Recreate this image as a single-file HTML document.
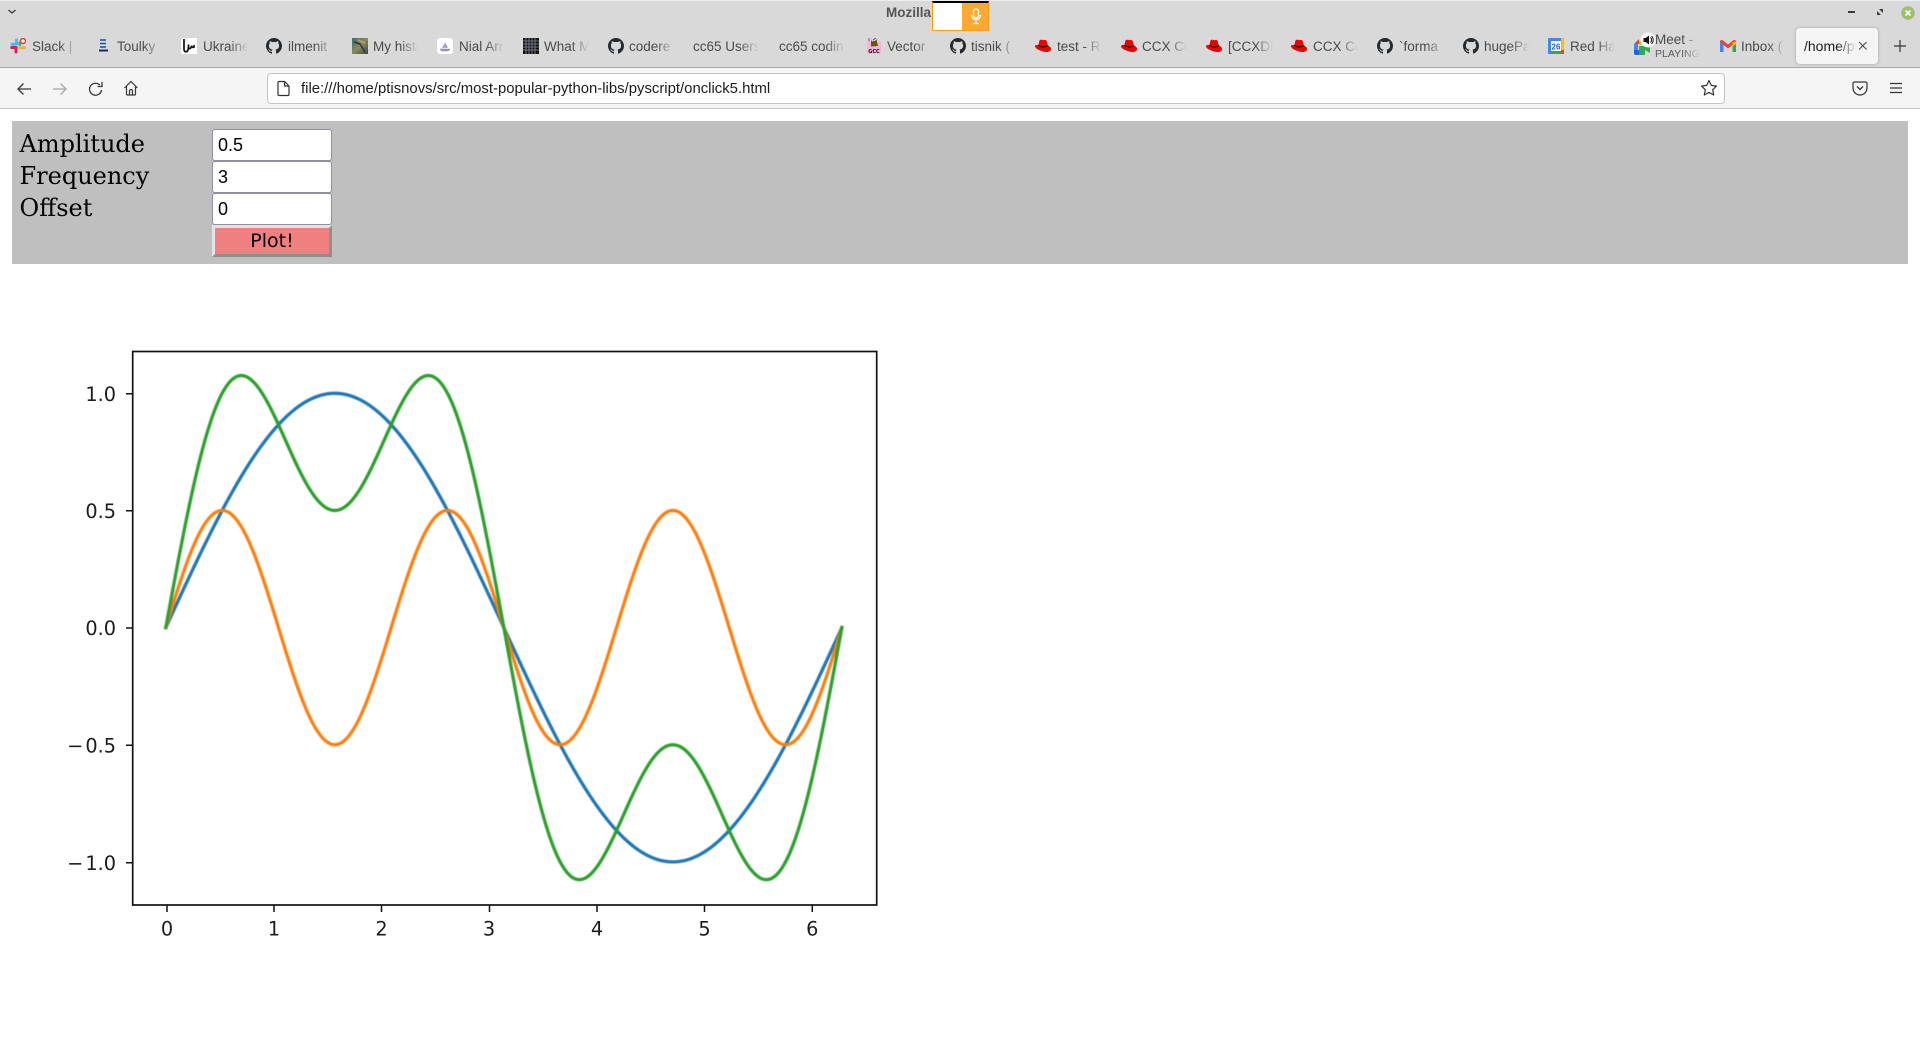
<!DOCTYPE html>
<html><head><meta charset="utf-8"><title>onclick5</title>
<style>
html,body{margin:0;padding:0;width:1920px;height:1047px;overflow:hidden;background:#fff}
body{position:relative;font-family:"Liberation Sans",sans-serif}
div,span,svg,input,button{position:absolute;box-sizing:border-box}
.t{top:38px;height:18px;line-height:18px;font-size:13.5px;color:#4a4a4a;width:45px;overflow:hidden;white-space:nowrap;-webkit-mask-image:linear-gradient(90deg,#000 60%,transparent 100%);mask-image:linear-gradient(90deg,#000 60%,transparent 100%)}
.i{top:38px;width:16px;height:16px}
.lb{left:19.5px;font-family:"DejaVu Serif",serif;font-size:24px;line-height:28px;height:28px;color:#000;white-space:nowrap}
.in{left:212px;width:120px;height:32px;background:#fff;border:1px solid #8f8f9d;border-radius:3px;font-family:"Liberation Sans",sans-serif;font-size:18px;line-height:30px;padding:0 0 0 5px;color:#000}
.tk{font-family:"DejaVu Sans",sans-serif;font-size:19.3px;fill:#1c1c1c}
</style></head><body>
<svg width="0" height="0" style="left:0;top:0"><defs>
<symbol id="gh" viewBox="0 0 16 16"><path fill="#24292e" d="M8 0C3.58 0 0 3.58 0 8c0 3.54 2.29 6.53 5.47 7.59.4.07.55-.17.55-.38 0-.19-.01-.82-.01-1.49-2.01.37-2.53-.49-2.69-.94-.09-.23-.48-.94-.82-1.13-.28-.15-.68-.52-.01-.53.63-.01 1.08.58 1.23.82.72 1.21 1.87.87 2.33.66.07-.52.28-.87.51-1.07-1.78-.2-3.64-.89-3.64-3.95 0-.87.31-1.59.82-2.15-.08-.2-.36-1.02.08-2.12 0 0 .67-.21 2.2.82.64-.18 1.32-.27 2-.27.68 0 1.36.09 2 .27 1.53-1.04 2.2-.82 2.2-.82.44 1.1.16 1.92.08 2.12.51.56.82 1.27.82 2.15 0 3.07-1.87 3.75-3.65 3.95.29.25.54.73.54 1.48 0 1.07-.01 1.93-.01 2.2 0 .21.15.46.55.38A8.013 8.013 0 0016 8c0-4.42-3.58-8-8-8z"/></symbol>
<symbol id="hat" viewBox="0 0 16 16"><path fill="#ee0000" d="M4.500 2.500C5.500 1.200 7.500 1.800 8.500 2.200 10 1.600 11.300 1.800 11.800 3.500L12.800 7.500C14.800 8.200 16 9.500 16 11 16 13 14 14 11.500 14 7.500 14 3.500 12 1.800 10.800.7 10 0 9 0 8.200 0 7 1.800 6.700 3.300 7.200L4.500 2.500Z"/><path fill="none" stroke="#111" stroke-width="1.100" d="M3.300 7.300C6 9.300 10 9.800 12.800 7.700"/></symbol>
</defs></svg>

<!-- title + tab bar -->
<div style="left:0;top:0;width:1920px;height:83px;background:#d9d9d9"></div>
<div style="left:0;top:0;width:1920px;height:1px;background:#eee"></div>
<div style="left:0;top:67px;width:1920px;height:1px;background:#a9a9a9"></div>
<svg style="left:7px;top:8px" width="10" height="8"><path d="M1.500 2 5 5 8.500 2" fill="none" stroke="#3c3c3c" stroke-width="1.400"/></svg>
<div style="left:886px;top:4px;height:18px;line-height:18px;font-size:13.500px;font-weight:bold;color:#555">Mozilla</div>
<div style="left:932px;top:1px;width:57px;height:30px;background:#ffa833;border:1px solid #ff9a10;border-top:2px solid #000"></div>
<div style="left:933px;top:3px;width:29px;height:27px;background:#fff"></div>
<svg style="left:968px;top:8px" width="16" height="18"><rect x="5.500" y="1" width="5" height="9" rx="2.500" fill="none" stroke="#fff" stroke-width="1.200"/><path d="M3.500 7c0 6 9 6 9 0M8 11.500V15M5 15.500h6" fill="none" stroke="#fff" stroke-width="1.200"/></svg>
<svg style="left:1847px;top:8px" width="12" height="8"><rect x="1" y="3" width="7" height="2" fill="#3a3a3a"/></svg>
<svg style="left:1875px;top:6px" width="12" height="12"><path d="M4 3h4v4zM6 9H2V5z" fill="#3a3a3a"/></svg>
<svg style="left:1900px;top:5px" width="16" height="16"><circle cx="8" cy="8" r="6.800" fill="#9cbf70"/><path d="M5.500 5.500l5 5M10.500 5.500l-5 5" stroke="#fff" stroke-width="1.600"/></svg>

<!-- tabs -->
<svg class="i" style="left:10px" viewBox="0 0 16 16"><g stroke-width="3" stroke-linecap="round" fill="none"><path stroke="#36c5f0" d="M6.500 2v4M2 6.200h4"/><path stroke="#2eb67d" d="M2 9.800h-.1M6.300 9.500V9.500"/><path stroke="#e01e5a" d="M6 9.500v4.500M1.700 9.500h4"/><path stroke="#ecb22e" d="M9.800 9.800h4.500"/><path stroke="#2eb67d" d="M9.800 5v1.500"/></g><circle cx="13" cy="3" r="2.500" fill="#fff" stroke="#e33" stroke-width="1.500"/></svg>
<span class="t" style="left:32px">Slack | G</span>
<svg class="i" style="left:99px" viewBox="0 0 16 16"><path d="M1 2h6M1 5.500h6M1 9h6" stroke="#1c4f9c" stroke-width="1.600"/><path d="M0 12.500h9" stroke="#10305c" stroke-width="2"/></svg>
<span class="t" style="left:117px">Toulky</span>
<svg class="i" style="left:181px" viewBox="0 0 16 16"><rect width="16" height="16" fill="#fff"/><path d="M3 1v10c0 3.500 3 3.500 4 1 .6-2 .4-4.500.7-5.500M8 10c1 1 2 .5 2.200-1.500M10.500 7.500c.2 2 1.500 2.200 2.500 1.500 0-1 .3-2 .3-2" fill="none" stroke="#111" stroke-width="1.700"/></svg>
<span class="t" style="left:203px">Ukraine</span>
<svg class="i" style="left:266px"><use href="#gh"/></svg>
<span class="t" style="left:288px">ilmenit</span>
<svg class="i" style="left:352px" viewBox="0 0 16 16"><defs><linearGradient id="ph" x1="0" y1="0" x2="1" y2="1"><stop offset="0" stop-color="#3a6d78"/><stop offset=".5" stop-color="#8a8a5a"/><stop offset="1" stop-color="#3a4a4e"/></linearGradient></defs><rect width="16" height="16" fill="url(#ph)"/><path d="M2 4l6 2 5 8" stroke="#28353a" stroke-width="1.500" fill="none"/><path d="M6 2l7 3" stroke="#b9a268" stroke-width="1.500"/></svg>
<span class="t" style="left:373px">My histo</span>
<svg class="i" style="left:437px" viewBox="0 0 16 16"><rect width="16" height="16" rx="3" fill="#fff"/><path d="M3 11h10l-1.500 2h-7zM8 4v6M8 5l2.500 4.500H8.500M7.500 6L5.500 9.500h2" fill="#99a" stroke="#889" stroke-width=".5"/></svg>
<span class="t" style="left:459px">Nial Arr</span>
<svg class="i" style="left:523px" viewBox="0 0 16 16"><rect width="16" height="16" fill="#111"/><path d="M3 0v16M6 0v16M9 0v16M12 0v16M0 3h16M0 6h16M0 9h16M0 12h16" stroke="#8a8ea0" stroke-width=".8"/></svg>
<span class="t" style="left:544px">What M</span>
<svg class="i" style="left:608px"><use href="#gh"/></svg>
<span class="t" style="left:629px">codere</span>
<span class="t" style="left:693px;width:66px;-webkit-mask-image:linear-gradient(90deg,#000 70%,transparent 100%);mask-image:linear-gradient(90deg,#000 70%,transparent 100%)">cc65 Users</span>
<span class="t" style="left:779px;width:66px;-webkit-mask-image:linear-gradient(90deg,#000 70%,transparent 100%);mask-image:linear-gradient(90deg,#000 70%,transparent 100%)">cc65 coding</span>
<svg class="i" style="left:866px" viewBox="0 0 16 16"><rect x="1" y="3" width="14" height="13" rx="2" fill="#f3b6d6"/><path d="M5 1l1 3 1-1 2 0 1.500-2 .5 3 1 4-7 .5z" fill="#5d5a10"/><path d="M3 0v3M7 2l3-2" stroke="#8a3aa0" stroke-width="1"/><text x="8" y="15" text-anchor="middle" font-family="DejaVu Sans" font-size="5" font-weight="bold" fill="#111">GCC</text></svg>
<span class="t" style="left:887px">Vector</span>
<svg class="i" style="left:950px"><use href="#gh"/></svg>
<span class="t" style="left:971px">tisnik (</span>
<svg class="i" style="left:1035px"><use href="#hat"/></svg>
<span class="t" style="left:1057px">test - R</span>
<svg class="i" style="left:1121px"><use href="#hat"/></svg>
<span class="t" style="left:1142px">CCX Co</span>
<svg class="i" style="left:1206px"><use href="#hat"/></svg>
<span class="t" style="left:1228px">[CCXDE</span>
<svg class="i" style="left:1291px"><use href="#hat"/></svg>
<span class="t" style="left:1313px">CCX Co</span>
<svg class="i" style="left:1377px"><use href="#gh"/></svg>
<span class="t" style="left:1399px">`forma</span>
<svg class="i" style="left:1463px"><use href="#gh"/></svg>
<span class="t" style="left:1484px">hugePa</span>
<svg class="i" style="left:1548px" viewBox="0 0 16 16"><rect width="16" height="16" rx="1" fill="#4285f4"/><rect x="3" y="3" width="10" height="10" fill="#fff"/><rect x="13" y="0" width="3" height="12" fill="#fbbc04"/><rect x="3" y="13" width="10" height="3" fill="#34a853"/><rect x="13" y="12" width="3" height="4" fill="#ea4335"/><text x="8" y="11.500" text-anchor="middle" font-family="Liberation Sans" font-size="8" font-weight="bold" fill="#1a5fd0">26</text></svg>
<span class="t" style="left:1570px">Red Ha</span>
<svg class="i" style="left:1634px;top:39px" viewBox="0 0 16 16"><path d="M0 5h5V0z" fill="#ea4335"/><rect x="5" y="2" width="6" height="4" fill="#fbbc04"/><rect y="5" width="4" height="6" fill="#4285f4"/><path d="M0 11h5v5H2a2 2 0 01-2-2z" fill="#1967d2"/><rect x="5" y="7" width="6" height="9" fill="#34a853"/><path d="M11 7l5-3v10l-5-3z" fill="#34a853"/></svg>
<svg style="left:1640px;top:32px" width="16" height="16"><circle cx="8" cy="8" r="7.500" fill="#fff"/><path d="M3.500 6h2L9 3.500v9L5.500 10h-2z" fill="#111"/><path d="M10.500 5.500a3.500 3.500 0 010 5M11.500 4a5.500 5.500 0 010 8" fill="none" stroke="#111" stroke-width="1"/></svg>
<span class="t" style="left:1655px;top:31px">Meet - </span>
<span class="t" style="left:1655px;top:45px;font-size:10.500px;color:#5a5a5a">PLAYING</span>
<svg class="i" style="left:1720px" viewBox="0 0 16 16"><path d="M0 3.500V14h3.500V7z" fill="#4285f4"/><path d="M16 3.500V14h-3.500V7z" fill="#34a853"/><path d="M0 3.500C0 2 2 1.500 3 2.500L8 6.500l5-4c1-1 3-.5 3 1L12.500 7 8 10.500 3.500 7z" fill="#ea4335"/><path d="M12.500 4.500L16 3.500V6l-3.500 2.500z" fill="#fbbc04"/></svg>
<span class="t" style="left:1741px">Inbox (</span>
<div style="left:1796px;top:28px;width:82px;height:36px;background:#f5f5f5;border-radius:4px;box-shadow:0 0 3px rgba(0,0,0,.25)"></div>
<span class="t" style="left:1804px;top:37px;width:53px;color:#1c1c1c;font-size:14px;-webkit-mask-image:linear-gradient(90deg,#000 62%,transparent 100%);mask-image:linear-gradient(90deg,#000 62%,transparent 100%)">/home/ptisnovs</span>
<svg style="left:1856px;top:39px" width="14" height="14"><path d="M3 3l7.500 7.500M10.500 3L3 10.500" stroke="#444" stroke-width="1"/></svg>
<svg style="left:1893px;top:39px" width="14" height="14"><path d="M7 1v12M1 7h12" stroke="#333" stroke-width="1.200"/></svg>

<!-- toolbar -->
<div style="left:0;top:68px;width:1920px;height:40px;background:#f5f5f5"></div>
<div style="left:0;top:108px;width:1920px;height:1px;background:#c9c9c9"></div>
<svg style="left:16px;top:81px" width="16" height="16"><path d="M15 8H2M7.500 2.500L2 8l5.500 5.500" fill="none" stroke="#3a3a3a" stroke-width="1.300"/></svg>
<svg style="left:52px;top:81px" width="16" height="16"><path d="M1 8h13M8.500 2.500L14 8l-5.500 5.500" fill="none" stroke="#a8a8a8" stroke-width="1.300"/></svg>
<svg style="left:88px;top:81px" width="16" height="16"><path d="M13.500 9a6 6 0 1 1-1.700-5M14 1v4.500H9.500" fill="none" stroke="#3a3a3a" stroke-width="1.300"/></svg>
<svg style="left:123px;top:80px" width="16" height="17"><path d="M1.500 8L8 1.500 14.500 8M3.500 6.500V14a1 1 0 001 1h7a1 1 0 001-1V6.500M6.500 15v-4a1.500 1.500 0 013 0v4" fill="none" stroke="#3a3a3a" stroke-width="1.200"/></svg>
<div style="left:267px;top:73px;width:1458px;height:31px;background:#fff;border:1px solid #c4c4c4;border-radius:4px"></div>
<svg style="left:276px;top:80px" width="15" height="17"><path d="M2 2.500a1 1 0 011-1h5.500L13 6v8.500a1 1 0 01-1 1H3a1 1 0 01-1-1zM8.500 1.500V6H13" fill="none" stroke="#333" stroke-width="1.200"/></svg>
<div id="url" style="left:301px;top:79px;height:20px;line-height:20px;font-size:14.900px;color:#1c1c1c;white-space:nowrap">file:///home/ptisnovs/src/most-popular-python-libs/pyscript/onclick5.html</div>
<svg style="left:1700px;top:79px" width="18" height="18"><path d="M9 1.500l2.300 4.900 5.200.7-3.800 3.600 1 5.300L9 13.400 4.300 16l1-5.300L1.500 7.100l5.200-.7z" fill="none" stroke="#333" stroke-width="1.200" stroke-linejoin="round"/></svg>
<svg style="left:1852px;top:80px" width="16" height="16"><path d="M2.500 2h11a1.500 1.500 0 011.500 1.500V8a7 7 0 01-14 0V3.500A1.500 1.500 0 012.500 2z" fill="none" stroke="#333" stroke-width="1.200"/><path d="M5 6.500L8 9.500l3-3" fill="none" stroke="#333" stroke-width="1.300"/></svg>
<svg style="left:1888px;top:80px" width="16" height="16"><path d="M2 3.500h12M2 8h12M2 12.500h12" stroke="#333" stroke-width="1.300"/></svg>

<!-- page -->
<div style="left:12px;top:121px;width:1896px;height:143px;background:#bfbfbf"></div>
<div class="lb" style="top:130px">Amplitude</div>
<div class="lb" style="top:162px">Frequency</div>
<div class="lb" style="top:194px">Offset</div>
<div class="in" style="top:129px">0.5</div>
<div class="in" style="top:161px">3</div>
<div class="in" style="top:193px">0</div>
<div style="left:212px;top:225px;width:120px;height:32px;background:#f08080;border:3px solid;border-color:#e3e3e3 #8f8f8f #8f8f8f #e3e3e3;font-family:'DejaVu Sans',sans-serif;font-size:19px;line-height:27px;text-align:center;color:#000">Plot!</div>

<!-- plot -->
<svg id="plot" style="left:0;top:0" width="1920" height="1047">
<g fill="none" stroke-width="3.300" stroke-linejoin="round" stroke-linecap="square" style="filter:blur(.5px)">
<path id="p1" stroke="#1f77b4"/><path id="p2" stroke="#ff7f0e"/><path id="p3" stroke="#2ca02c"/>
</g>
<g style="filter:blur(.3px)">
<rect x="132.700" y="351.500" width="744" height="553.500" fill="none" stroke="#111" stroke-width="1.700"/>
<g stroke="#111" stroke-width="1.500">
<path d="M126 393.700h7M126 510.700h7M126 628h7M126 745.300h7M126 862.800h7"/>
<path d="M167 905v7M274 905v7M381.500 905v7M489.500 905v7M597 905v7M704.500 905v7M812.300 905v7"/>
</g>
<g class="tk" text-anchor="end">
<text x="116" y="401">1.0</text><text x="116" y="518">0.5</text><text x="116" y="635">0.0</text><text x="116" y="752.500">−<tspan dx="2">0.5</tspan></text><text x="116" y="870">−<tspan dx="2">1.0</tspan></text>
</g>
<g class="tk" text-anchor="middle">
<text x="167" y="935.500">0</text><text x="274" y="935.500">1</text><text x="381.500" y="935.500">2</text><text x="489" y="935.500">3</text><text x="597" y="935.500">4</text><text x="704.500" y="935.500">5</text><text x="812.300" y="935.500">6</text>
</g>
</g>
</svg>
<script>
(function(){
var fs=[function(x){return Math.sin(x)},function(x){return .5*Math.sin(3*x)},function(x){return Math.sin(x)+.5*Math.sin(3*x)}];
fs.forEach(function(f,k){
var d='';
for(var i=0;i<=400;i++){var x=i/400*2*Math.PI;
d+=(i?'L':'M')+(165.8+107.6*x).toFixed(2)+' '+(627.6-234.3*f(x)).toFixed(2);}
document.getElementById('p'+(k+1)).setAttribute('d',d);
});
})();
</script>
</body></html>
